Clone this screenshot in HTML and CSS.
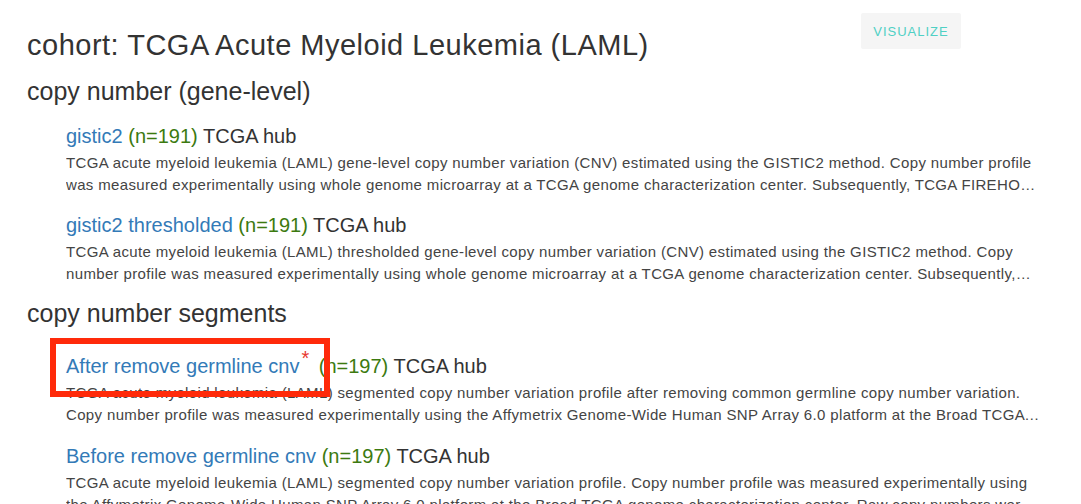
FILE: index.html
```html
<!DOCTYPE html>
<html lang="en">
<head>
<meta charset="utf-8">
<title>Cohort: TCGA Acute Myeloid Leukemia (LAML)</title>
<link rel="stylesheet" href="styles.css">
</head>
<body>
<div class="page">
  <header class="head">
    <h1 class="cohort">cohort: TCGA Acute Myeloid Leukemia (LAML)</h1>
    <button class="viz" type="button">Visualize</button>
  </header>

  <section class="group">
    <h2 class="group-title">copy number (gene-level)</h2>
    <div class="dataset">
      <div class="ds-title"><a class="ds-link" href="#">gistic2</a> <span class="ds-count">(n=191)</span> <span class="ds-hub">TCGA hub</span></div>
      <p class="ds-desc">TCGA acute myeloid leukemia (LAML) gene-level copy number variation (CNV) estimated using the GISTIC2 method. Copy number profile was measured experimentally using whole genome microarray at a TCGA genome characterization center. Subsequently, TCGA FIREHOSE pipeline applied GISTIC2 method to produce segmented CNV data, which was then mapped to genes to produce gene-level estimates.</p>
    </div>
    <div class="dataset">
      <div class="ds-title"><a class="ds-link" href="#">gistic2 thresholded</a> <span class="ds-count">(n=191)</span> <span class="ds-hub">TCGA hub</span></div>
      <p class="ds-desc">TCGA acute myeloid leukemia (LAML) thresholded gene-level copy number variation (CNV) estimated using the GISTIC2 method. Copy number profile was measured experimentally using whole genome microarray at a TCGA genome characterization center. Subsequently, TCGA FIREHOSE pipeline applied GISTIC2 method to produce segmented CNV data, which was then mapped to genes to produce gene-level estimates.</p>
    </div>
  </section>

  <section class="group">
    <h2 class="group-title">copy number segments</h2>
    <div class="dataset">
      <div class="ds-title"><span class="marked"><a class="ds-link" href="#">After remove germline cnv</a><sup class="star">*</sup></span> <span class="ds-count">(n=197)</span> <span class="ds-hub">TCGA hub</span></div>
      <p class="ds-desc">TCGA acute myeloid leukemia (LAML) segmented copy number variation profile after removing common germline copy number variation. Copy number profile was measured experimentally using the Affymetrix Genome-Wide Human SNP Array 6.0 platform at the Broad TCGA genome characterization center. Raw copy numbers were estimated at each of the SNP and copy-number markers.</p>
    </div>
    <div class="dataset">
      <div class="ds-title"><a class="ds-link" href="#">Before remove germline cnv</a> <span class="ds-count">(n=197)</span> <span class="ds-hub">TCGA hub</span></div>
      <p class="ds-desc">TCGA acute myeloid leukemia (LAML) segmented copy number variation profile. Copy number profile was measured experimentally using the Affymetrix Genome-Wide Human SNP Array 6.0 platform at the Broad TCGA genome characterization center. Raw copy numbers were estimated at each of the SNP and copy-number markers.</p>
    </div>
  </section>
</div>
</body>
</html>
```
FILE: styles.css
```css
*, *::before, *::after { box-sizing: border-box; }

html, body {
  margin: 0;
  padding: 0;
  background: #ffffff;
}

body {
  font-family: "Liberation Sans", Arial, Helvetica, sans-serif;
  color: #333333;
}

.page {
  padding: 13px 0 0 27px;
  width: 1081px;
  height: 504px;
  overflow: hidden;
}

.head {
  display: flex;
  align-items: flex-start;
}

.cohort {
  margin: 16px 0 0 0;
  font-size: 29px;
  line-height: 32px;
  letter-spacing: 0.5px;
  font-weight: normal;
  color: #333333;
}

.viz {
  margin-left: auto;
  margin-right: 120px;
  width: 100px;
  height: 36px;
  border: none;
  border-radius: 2px;
  background: #f5f5f5;
  color: #4fd0c4;
  font-family: "Liberation Sans", Arial, Helvetica, sans-serif;
  font-size: 13px;
  letter-spacing: 1px;
  text-transform: uppercase;
  padding: 0;
}

.group-title {
  margin: 16px 0 0 0;
  font-size: 25px;
  line-height: 28px;
  font-weight: normal;
  color: #333333;
}

.group + .group .group-title {
  margin-top: 14px;
}

.dataset {
  margin: 17px 0 0 39px;
  width: 978px;
}

.group-title + .dataset {
  margin-top: 19px;
}

.dataset + .dataset {
  margin-top: 18px;
}

.group:first-of-type .dataset + .dataset {
  margin-top: 17px;
}

.ds-title {
  font-size: 20px;
  line-height: 24px;
  color: #333333;
}

.ds-link {
  color: #337ab7;
  text-decoration: none;
}

.ds-count {
  color: #3c7a10;
}

.marked {
  position: relative;
}

.marked::after {
  content: "";
  position: absolute;
  left: -16px;
  top: -17px;
  width: 280px;
  height: 59px;
  border: 6px solid #ff2a0a;
  pointer-events: none;
}

.star {
  color: #e8392e;
  font-size: 20px;
  margin-left: 2px;
  margin-right: 4px;
}

.ds-desc {
  margin: 4px 0 0 0;
  font-size: 15px;
  line-height: 22px;
  letter-spacing: 0.35px;
  color: #444444;
  display: -webkit-box;
  -webkit-box-orient: vertical;
  -webkit-line-clamp: 2;
  overflow: hidden;
}
```
